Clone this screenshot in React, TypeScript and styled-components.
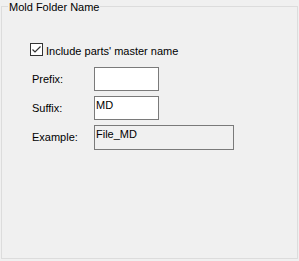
import styled, { createGlobalStyle } from "styled-components";

const GlobalStyle = createGlobalStyle`
  html, body {
    margin: 0;
    padding: 0;
    background: #f0f0f0;
  }
  body {
    font-family: "Liberation Sans", Arial, sans-serif;
    font-size: 11px;
    color: #000;
  }
`;

const Page = styled.div`
  width: 299px;
  height: 261px;
  box-sizing: border-box;
  padding: 6px 1px 0 1px;
  background: #f0f0f0;
`;

const GroupBox = styled.div`
  position: relative;
  width: 297px;
  height: 253px;
  box-sizing: border-box;
  border: 1px solid #dcdcdc;
  padding: 36px 0 0 28px;
`;

const GroupTitle = styled.div`
  position: absolute;
  top: -6px;
  left: 6px;
  padding: 0 1px;
  line-height: 13px;
  background: #f0f0f0;
`;

const CheckRow = styled.label`
  display: flex;
  align-items: flex-start;
  gap: 3px;
  height: 13px;
`;

const CheckText = styled.span`
  line-height: 13px;
  padding-top: 2px;
`;

const Fields = styled.div`
  display: grid;
  grid-template-columns: 62px auto;
  grid-auto-rows: 24px;
  row-gap: 5px;
  align-items: center;
  margin: 11px 0 0 2px;
`;

const FieldLabel = styled.div`
  line-height: 13px;
`;

const TextBox = styled.div<{ $width: number; $readOnly?: boolean }>`
  width: ${(p) => p.$width}px;
  height: ${(p) => (p.$readOnly ? 25 : 24)}px;
  box-sizing: border-box;
  border: 1px solid #7a7a7a;
  background: ${(p) => (p.$readOnly ? "#f0f0f0" : "#ffffff")};
  padding: 2px 1px 0 1px;
  line-height: 13px;
  align-self: start;
`;

function CheckBox() {
  return (
    <svg width="13" height="13" viewBox="0 0 13 13">
      <rect x="0.5" y="0.5" width="12" height="12" fill="#ffffff" stroke="#333333" />
      <polyline
        points="2.5,6.5 5,9 10.5,3.5"
        fill="none"
        stroke="#333333"
        strokeWidth="1.2"
      />
    </svg>
  );
}

export default function App() {
  return (
    <Page>
      <GlobalStyle />
      <GroupBox>
        <GroupTitle>Mold Folder Name</GroupTitle>
        <CheckRow>
          <CheckBox />
          <CheckText>Include parts' master name</CheckText>
        </CheckRow>
        <Fields>
          <FieldLabel>Prefix:</FieldLabel>
          <TextBox $width={65} />
          <FieldLabel>Suffix:</FieldLabel>
          <TextBox $width={65}>MD</TextBox>
          <FieldLabel>Example:</FieldLabel>
          <TextBox $width={140} $readOnly>
            File_MD
          </TextBox>
        </Fields>
      </GroupBox>
    </Page>
  );
}
